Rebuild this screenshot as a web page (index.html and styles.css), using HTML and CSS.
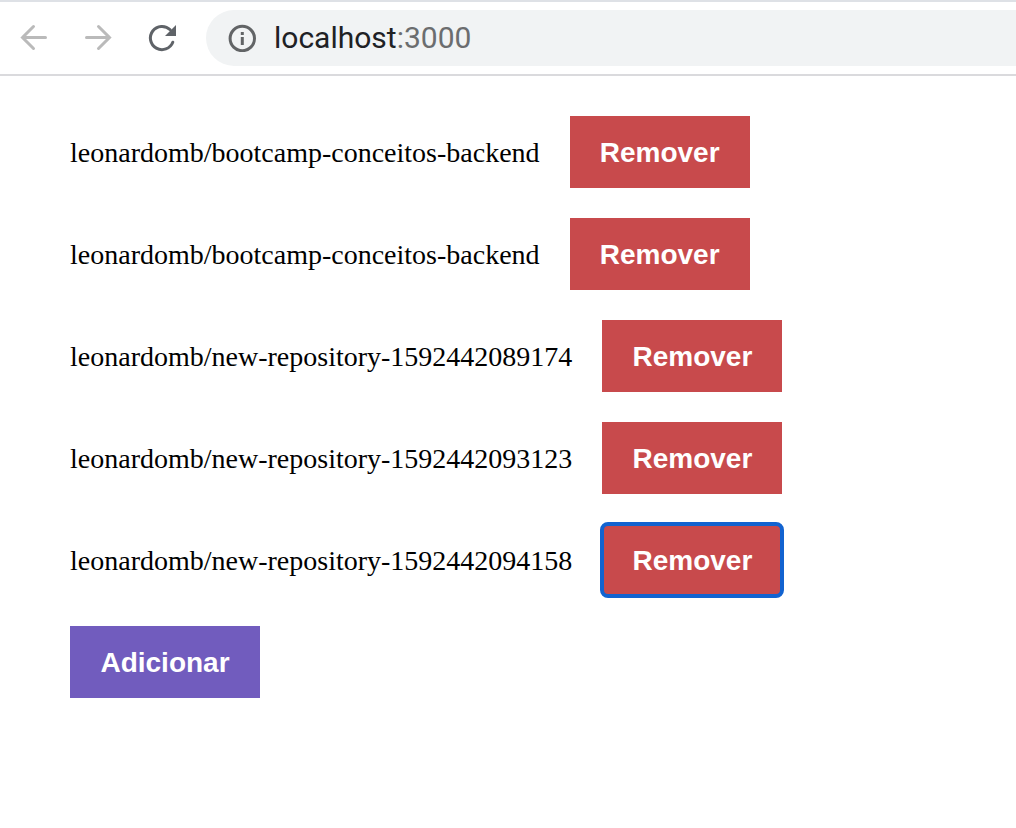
FILE: index.html
```html
<!DOCTYPE html>
<html lang="pt-BR">
<head>
<meta charset="utf-8">
<title>localhost:3000</title>
<link rel="stylesheet" href="styles.css">
</head>
<body>
<header class="toolbar">
  <button class="nav nav-off" type="button" aria-label="Voltar"><svg width="32" height="32" viewBox="0 0 32 32"><path d="M27.500 15.500H4.500M15.500 4.500l-11 11 11 11"/></svg></button>
  <button class="nav nav-off" type="button" aria-label="Avançar"><svg width="32" height="32" viewBox="0 0 32 32"><path d="M4.500 15.500h23M16.500 4.500l11 11-11 11"/></svg></button>
  <button class="nav" type="button" aria-label="Recarregar"><svg width="32" height="32" viewBox="0 0 32 32"><path d="M26.800 20.200A11.600 11.600 0 1 1 24.200 7.800"/><path class="solid" d="M30 3v11H19z"/></svg></button>
  <div class="address">
    <svg class="info" width="28" height="28" viewBox="0 0 28 28"><circle cx="14.300" cy="14.500" r="12.200"/><path d="M14.300 13v8M14.300 8v3"/></svg>
    <span class="url">localhost<span class="port">:3000</span></span>
  </div>
</header>
<main class="page">
  <ul class="list">
    <li class="item"><span class="name">leonardomb/bootcamp-conceitos-backend</span><button class="btn remove" type="button">Remover</button></li>
    <li class="item"><span class="name">leonardomb/bootcamp-conceitos-backend</span><button class="btn remove" type="button">Remover</button></li>
    <li class="item"><span class="name">leonardomb/new-repository-1592442089174</span><button class="btn remove" type="button">Remover</button></li>
    <li class="item"><span class="name">leonardomb/new-repository-1592442093123</span><button class="btn remove" type="button">Remover</button></li>
    <li class="item"><span class="name">leonardomb/new-repository-1592442094158</span><button class="btn remove focused" type="button">Remover</button></li>
  </ul>
  <button class="btn add" type="button">Adicionar</button>
</main>
</body>
</html>
```
FILE: styles.css
```css
* { box-sizing: border-box; }
body { margin: 0; background: #fff; color: #000; }
.toolbar { display: flex; align-items: center; gap: 32px; padding: 8px 0 8px 18px; border-top: 2px solid #dee1e6; border-bottom: 2px solid #dadadd; }
.nav { display: flex; padding: 0; border: 0; background: none; }
.nav svg { fill: none; stroke: #5f6368; stroke-width: 3; stroke-linecap: round; }
.nav-off svg { stroke: #bababa; }
.nav .solid { fill: #5f6368; stroke: none; }
.address { display: flex; flex: 1; align-items: center; gap: 18px; height: 56px; margin-left: -4px; padding-left: 22px; border-radius: 28px 0 0 28px; background: #f1f3f4; }
.info { fill: none; stroke: #626466; stroke-width: 3; }
.url { color: #202124; font: 30px/36px Roboto, sans-serif; }
.port { color: #6b6d6f; }
.page { padding: 40px 70px; }
.list { display: flex; flex-direction: column; gap: 30px; margin: 0 0 30px; padding: 0; list-style: none; }
.item { display: flex; align-items: center; gap: 30px; font: 28px/32px "Liberation Serif", "Times New Roman", serif; }
.name { padding-top: 2px; }
.btn { min-width: 180px; padding: 21px 30px 19px; border: 0; color: #fff; font: bold 28px/32px "Liberation Sans", Arial, sans-serif; }
.remove { background: #c84a4c; }
.add { min-width: 190px; background: #715cbe; }
.focused { border-radius: 6px; outline: 4px solid #1263d0; outline-offset: -2px; }
```
